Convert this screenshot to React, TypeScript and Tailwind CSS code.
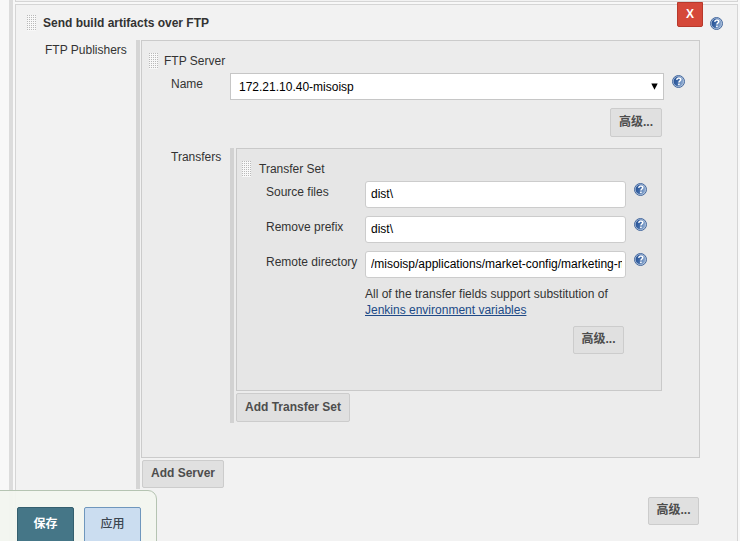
import React from "react";

function Help({ className = "" }: { className?: string }) {
  return (
    <svg viewBox="0 0 14 14" className={`h-[14px] w-[14px] shrink-0 ${className}`}>
      <defs>
        <linearGradient id="helpFill" x1="0" y1="0" x2="1" y2="0.3">
          <stop offset="0" stopColor="#234e92" />
          <stop offset="0.5" stopColor="#3c67a6" />
          <stop offset="1" stopColor="#8ba8cf" />
        </linearGradient>
      </defs>
      <circle cx="6.5" cy="6.5" r="6" fill="#b9c9df" stroke="#44689e" strokeWidth="1" />
      <circle cx="6.5" cy="6.5" r="4.9" fill="url(#helpFill)" />
      <path
        d="M4.700 4.900C4.900 3.500 5.700 3 6.800 3c1.200 0 2 .6 2 1.600 0 1.300-1.900 1.500-1.900 3"
        fill="none"
        stroke="#fff"
        strokeWidth="1.500"
      />
      <rect x="6.100" y="8.600" width="1.600" height="1.500" fill="#fff" />
    </svg>
  );
}

function Grip() {
  return (
    <svg className="h-4 w-[9px] shrink-0" viewBox="0 0 9 16" shapeRendering="crispEdges">
      <defs>
        <pattern id="gripDots" width="2" height="2" patternUnits="userSpaceOnUse">
          <rect width="2" height="2" fill="#f8f8f8" />
          <rect width="1" height="1" fill="#b9b9b9" />
        </pattern>
      </defs>
      <rect width="9" height="16" fill="url(#gripDots)" />
    </svg>
  );
}

function Button({ children, className = "" }: { children: React.ReactNode; className?: string }) {
  return (
    <button
      className={`block shrink-0 whitespace-nowrap rounded-[2px] border border-[#cccccc] bg-[#e0e0e0] pb-[2px] text-center text-xs font-bold leading-4 text-[#4d4d4d] ${className}`}
    >
      {children}
    </button>
  );
}

function Field({ label, value }: { label: string; value: string }) {
  return (
    <div className="mb-2 flex h-[27px] items-start">
      <span className="w-[99px] shrink-0 pt-[3px] whitespace-nowrap">{label}</span>
      <input
        readOnly
        value={value}
        className="h-[27px] w-[261px] shrink-0 rounded-[3px] border border-[#cccccc] bg-white pl-[5px] pr-[3px] pb-[2px] text-xs text-black outline-none"
      />
      <Help className="ml-2 mt-[2px]" />
    </div>
  );
}

function TransferSet() {
  return (
    <div className="h-[243px] w-[426px] border border-[#c9c9c9] bg-[#e6e6e6] pt-3">
      <div className="flex h-5 items-start pl-[5px]">
        <Grip />
        <span className="ml-2">Transfer Set</span>
      </div>
      <div className="pl-[29px]">
        <Field label="Source files" value="dist\" />
        <Field label="Remove prefix" value="dist\" />
        <Field label="Remote directory" value="/misoisp/applications/market-config/marketing-mobile/" />
        <p className="ml-[99px] whitespace-nowrap">
          All of the transfer fields support substitution of
          <br />
          <a className="text-[#204a87] underline">Jenkins environment variables</a>
        </p>
      </div>
      <Button className="ml-[336px] mt-2 h-7 w-[51px]">高级...</Button>
    </div>
  );
}

function FtpServer() {
  return (
    <div className="h-[418px] w-[559px] border border-[#cbcbcb] bg-[#ececec] pt-3">
      <div className="flex h-5 items-start pl-[7px]">
        <Grip />
        <span className="ml-[6px]">FTP Server</span>
      </div>
      <div className="flex items-start pl-[29px]">
        <span className="w-[59px] shrink-0 pt-[3px]">Name</span>
        <div className="flex h-[27px] w-[434px] shrink-0 items-center justify-between border border-[#c6c6c6] bg-white pl-2 pr-[5px] text-black">
          <span>172.21.10.40-misoisp</span>
          <svg viewBox="0 0 7 7" className="mb-px h-[7px] w-[7px]">
            <path d="M0.300 0.500h6.400L3.500 6.800z" fill="#000" />
          </svg>
        </div>
        <Help className="ml-2 mt-[2px]" />
      </div>
      <Button className="ml-[468px] mt-2 h-[29px] w-[52px]">高级...</Button>
      <div className="mt-[11px] flex items-start pl-[29px]">
        <span className="w-[59px] shrink-0 pt-px">Transfers</span>
        <div className="h-[275px] border-l-4 border-[#d2d2d2] pl-[2px]">
          <TransferSet />
          <Button className="mt-[2px] h-[29px] w-[114px]">Add Transfer Set</Button>
        </div>
      </div>
    </div>
  );
}

export default function App() {
  return (
    <div className="relative h-[541px] w-[740px] overflow-hidden bg-[#f8f8f8] pl-[9px] font-['Liberation_Sans','Noto_Sans_CJK_SC',sans-serif] text-xs leading-4 text-[#333333]">
      <div className="h-[541px] border-l-4 border-[#dcdcdc] pl-[2px]">
        <div className="h-[2px] w-[723px] border border-t-0 border-[#d5d5d5] bg-[#f2f2f2]" />
        <div className="mt-[2px] h-[560px] w-[723px] border border-[#d5d5d5] bg-[#f2f2f2] pt-[10px]">
          <div className="flex h-[25px] items-start pl-[11px]">
            <Grip />
            <b className="ml-[7px] w-[651px]">Send build artifacts over FTP</b>
            <Help className="ml-[16px] mt-[2px]" />
          </div>
          <div className="flex items-start pl-[29px]">
            <span className="w-[91px] shrink-0 pt-[2px]">FTP Publishers</span>
            <div className="h-[449px] border-l-4 border-[#d5d5d5] pl-px">
              <FtpServer />
              <Button className="ml-px mt-[2px] h-[28px] w-[82px]">Add Server</Button>
            </div>
          </div>
          <Button className="ml-[632px] mt-2 h-[28px] w-[51px]">高级...</Button>
        </div>
      </div>

      <button className="absolute left-[677px] top-[2px] h-[25px] w-[26px] rounded-b-[2px] border border-[#b8392c] bg-[#d54839] pb-[2px] text-xs font-bold text-white">
        X
      </button>

      <div className="absolute -left-px top-[490px] flex h-[60px] w-[158px] gap-[10px] rounded-tr-[9px] border border-[#b5c4b2] bg-[#f2f6ef]/95 pl-[17px] pt-4">
        <button className="h-10 w-[57px] rounded-[2px] border border-[#345f6e] bg-[#457687] pb-[6px] font-bold text-white">
          保存
        </button>
        <button className="h-10 w-[57px] rounded-[2px] border border-[#6f97bd] bg-[#cbddf0] pb-[6px] font-medium text-[#3c4650]">
          应用
        </button>
      </div>
    </div>
  );
}
